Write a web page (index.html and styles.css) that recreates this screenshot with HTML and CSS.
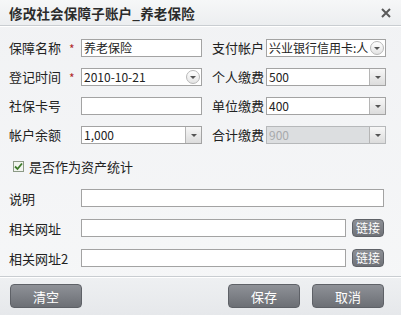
FILE: index.html
```html
<!DOCTYPE html>
<html lang="zh">
<head>
  <meta charset="UTF-8" />
  <title>修改社会保障子账户_养老保险</title>
  <link rel="stylesheet" href="styles.css">
</head>
<body>
  <div class="dialog">
    <div class="titlebar">
      <h1>修改社会保障子账户_养老保险</h1>
      <svg class="close" width="10" height="10" viewBox="0 0 10 10"><path d="M1 1 L9 9 M9 1 L1 9" stroke="#5a5a5a" stroke-width="2"/></svg>
    </div>

    <div class="content">
      <div class="grid">
        <label>保障名称</label><span class="req">*</span>
        <div class="field"><span class="val">养老保险</span></div>
        <label class="rlabel">支付帐户</label>
        <div class="field"><span class="val">兴业银行信用卡:人</span><span class="round"><i></i></span></div>

        <label>登记时间</label><span class="req">*</span>
        <div class="field"><span class="val">2010-10-21</span><span class="round"><i></i></span></div>
        <label class="rlabel">个人缴费</label>
        <div class="field"><span class="val">500</span><span class="drop"><i></i></span></div>

        <label>社保卡号</label><span></span>
        <div class="field"></div>
        <label class="rlabel">单位缴费</label>
        <div class="field"><span class="val">400</span><span class="drop"><i></i></span></div>

        <label>帐户余额</label><span></span>
        <div class="field"><span class="val">1,000</span><span class="drop"><i></i></span></div>
        <label class="rlabel">合计缴费</label>
        <div class="field disabled"><span class="val">900</span><span class="drop"><i></i></span></div>
      </div>

      <div class="check-row">
        <span class="checkbox">
          <svg width="9" height="9" viewBox="0 0 9 9"><path d="M1 4.5 L3.5 7 L8 1.5" fill="none" stroke="#3d7a2a" stroke-width="1.8"/></svg>
        </span>
        <span>是否作为资产统计</span>
      </div>

      <div class="rows">
        <div class="row">
          <label>说明</label>
          <div class="field wide"></div>
        </div>
        <div class="row">
          <label>相关网址</label>
          <div class="field url"></div>
          <button class="link">链接</button>
        </div>
        <div class="row">
          <label>相关网址2</label>
          <div class="field url"></div>
          <button class="link">链接</button>
        </div>
      </div>
    </div>

    <div class="footer">
      <button class="btn">清空</button>
      <div class="spacer"></div>
      <button class="btn">保存</button>
      <button class="btn">取消</button>
    </div>
  </div>
</body>
</html>
```

FILE: styles.css
```css
body {
  margin: 0;
  font-family: "Noto Sans CJK SC", "DejaVu Sans", sans-serif;
  font-size: 13px;
  color: #222;
}

.dialog {
  width: 401px;
  height: 315px;
  display: flex;
  flex-direction: column;
  background: linear-gradient(#f1f2f4, #f6f7f8);
}

.titlebar {
  height: 25px;
  display: flex;
  align-items: center;
  justify-content: space-between;
  padding: 0 10px 0 9px;
  background: linear-gradient(#f6f7f8, #eceef0);
  border-bottom: 1px solid #c9cdd1;
  box-shadow: 0 1px 0 #ffffff;
}

.titlebar h1 {
  margin: 0;
  font-size: 13.5px;
  font-weight: bold;
  color: #2b2b2b;
  letter-spacing: 0.2px;
}

.content {
  padding: 13px 15px 0 9px;
  flex: 1;
}

.grid {
  display: grid;
  grid-template-columns: 59px 13px 121px 64px 120px;
  grid-auto-rows: 18px;
  row-gap: 11px;
  align-items: center;
}

.grid label {
  line-height: 18px;
}

.rlabel {
  padding-left: 10px;
}

.req {
  color: #b02a2a;
  font-size: 12px;
  padding-left: 1px;
}

.field {
  height: 16px;
  border: 1px solid #a3a3a3;
  background: #fff;
  display: flex;
  align-items: center;
  font-size: 12px;
}

.field .val {
  flex: 1;
  padding-left: 2px;
  white-space: nowrap;
  overflow: hidden;
  line-height: 16px;
}

.field.disabled {
  background: #dcdee0;
  border-color: #b6b8ba;
  color: #a8aaac;
}

.round {
  width: 12px;
  height: 12px;
  margin-right: 1px;
  border: 1px solid #b8b8b8;
  border-radius: 50%;
  background: linear-gradient(#ffffff, #e4e4e4);
  display: flex;
  align-items: center;
  justify-content: center;
}

.drop {
  width: 15px;
  height: 16px;
  border-left: 1px solid #b5b5b5;
  background: linear-gradient(#f7f7f7, #dcdcdc);
  display: flex;
  align-items: center;
  justify-content: center;
}

.round i, .drop i {
  width: 0;
  height: 0;
  border-left: 3px solid transparent;
  border-right: 3px solid transparent;
  border-top: 3px solid #555;
  margin-top: 1px;
}

.check-row {
  display: flex;
  align-items: center;
  gap: 5px;
  height: 20px;
  margin-top: 12px;
  padding-left: 4px;
}

.checkbox {
  width: 9px;
  height: 9px;
  border: 1px solid #8c9a86;
  background: #f2f5ef;
  display: flex;
  align-items: center;
  justify-content: center;
}

.rows {
  display: flex;
  flex-direction: column;
  gap: 12px;
  margin-top: 13px;
}

.row {
  display: flex;
  align-items: center;
  height: 18px;
}

.row label {
  width: 72px;
}

.field.wide {
  width: 301px;
}

.field.url {
  width: 263px;
}

.link {
  margin-left: 6px;
  width: 32px;
  height: 18px;
  padding: 0;
  border: 1px solid #5e6167;
  border-radius: 4px;
  background: linear-gradient(#8d9096, #6f7278);
  color: #fff;
  font-family: inherit;
  font-size: 12px;
  line-height: 16px;
}

.footer {
  height: 38px;
  border-top: 1px solid #c9cdd1;
  box-shadow: inset 0 1px 0 #ffffff;
  background: linear-gradient(#eef0f2, #e6e8eb);
  display: flex;
  align-items: center;
  padding: 0 17px 0 10px;
  gap: 12px;
}

.spacer {
  flex: 1;
}

.btn {
  width: 72px;
  height: 24px;
  border: 1px solid #5e6167;
  border-radius: 4px;
  background: linear-gradient(#8e9197, #6c6f75);
  color: #fff;
  font-family: inherit;
  font-size: 13px;
  padding: 0;
}
```
